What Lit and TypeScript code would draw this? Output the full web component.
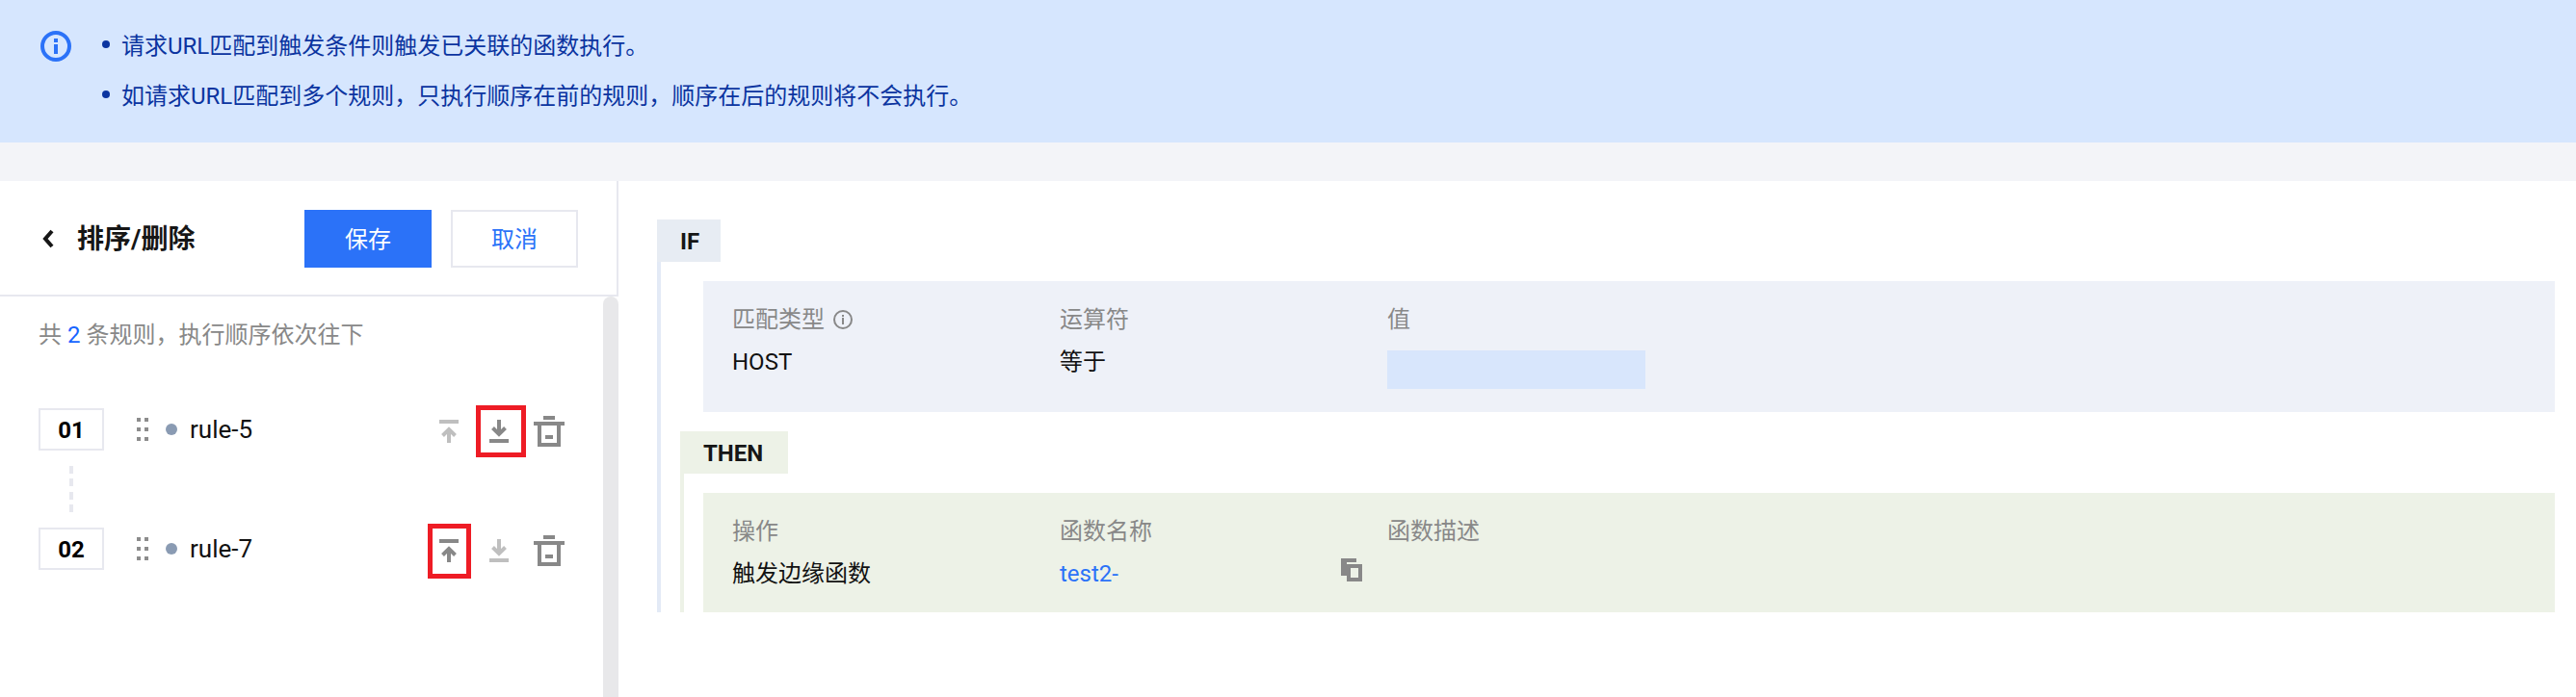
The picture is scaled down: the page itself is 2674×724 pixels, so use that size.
import {LitElement, html, css, svg} from 'lit';
import {customElement} from 'lit/decorators.js';

const upIcon = svg`<rect x="6" y="4" width="20" height="4" fill="currentColor"/><rect x="14" y="14" width="4" height="14" fill="currentColor"/><path d="M9.500 20.500 16 14l6.500 6.500" fill="none" stroke="currentColor" stroke-width="4"/>`;
const downIcon = svg`<rect x="6" y="24" width="20" height="4" fill="currentColor"/><rect x="14" y="4" width="4" height="14" fill="currentColor"/><path d="M9.500 12.500 16 19l6.500-6.500" fill="none" stroke="currentColor" stroke-width="4"/>`;
const trashIcon = svg`<rect x="10" y="0" width="12" height="4" fill="currentColor"/><rect x="0" y="6" width="32" height="4" fill="currentColor"/><path d="M6 10v20h20V10" fill="none" stroke="currentColor" stroke-width="4"/><rect x="12" y="20" width="8" height="4" fill="currentColor"/>`;

const rules = [
  {no: '01', name: 'rule-5', upOff: true, downOff: false, mark: 'down'},
  {no: '02', name: 'rule-7', upOff: false, downOff: true, mark: 'up'},
];

// full-width comma, written as an escape so it can't turn into an ascii one
const tips = [
  '请求URL匹配到触发条件则触发已关联的函数执行。',
  '如请求URL匹配到多个规则\uff0c只执行顺序在前的规则\uff0c顺序在后的规则将不会执行。',
];
const noteTail = '条规则\uff0c执行顺序依次往下';

@customElement('app-root')
export class AppRoot extends LitElement {
  static styles = css`
    :host {
      display: block;
      width: 2674px;
      height: 724px;
      overflow: hidden;
      background: #f3f4f8;
      font-family: Roboto, "Noto Sans CJK SC", sans-serif;
      font-size: 24px;
      color: #111;
    }

    .banner {
      height: 148px;
      box-sizing: border-box;
      background: #d6e6fe;
      padding: 20px 0 0 42px;
      display: flex;
      color: #0b34a0;
    }
    .banner-icon { margin: 12px 32px 0 0; display: block; }
    .banner-text { margin-top: 2px; }
    .banner-line {
      height: 52px;
      line-height: 52px;
      display: flex;
      align-items: center;
      gap: 12px;
    }
    .banner-line::before {
      content: "";
      width: 8px;
      height: 8px;
      margin-top: -4px;
      border-radius: 50%;
      background: #0b34a0;
    }

    .main {
      margin-top: 40px;
      height: 536px;
      display: flex;
      background: #fff;
    }

    .left {
      width: 642px;
      flex: none;
      display: flex;
      flex-direction: column;
    }
    .head {
      height: 118px;
      box-sizing: border-box;
      padding: 30px 40px 0 44px;
      border-right: 2px solid #e7e8ef;
      display: flex;
      align-items: flex-start;
    }
    .back { margin: 20px 24px 0 0; display: block; }
    .title { font-size: 28px; font-weight: 700; line-height: 62px; color: #161616; flex: 1; }
    .btn {
      width: 132px;
      height: 60px;
      box-sizing: border-box;
      line-height: 62px;
      text-align: center;
      background: #2b72f8;
      color: #fff;
    }
    .btn.plain {
      margin-left: 20px;
      line-height: 58px;
      border: 2px solid #e7e8ef;
      background: #fff;
      color: #2b72f8;
    }
    .left-body {
      flex: 1;
      display: flex;
      border-top: 2px solid #e7e8ef;
    }
    .list { flex: 1; padding: 23px 40px 0 40px; }
    .note { line-height: 34px; color: #888; margin-bottom: 59px; }
    .note b { font-weight: 400; color: #1664ff; }
    .track { width: 16px; flex: none; background: #e8e8ea; border-radius: 8px 8px 0 0; }

    .row { height: 44px; display: flex; align-items: center; }
    .no {
      width: 68px;
      height: 44px;
      box-sizing: border-box;
      border: 2px solid #e7e8ef;
      text-align: center;
      line-height: 42px;
      font-weight: 700;
      color: #000;
      margin-right: 34px;
    }
    .grip {
      width: 12px;
      display: grid;
      grid-template-columns: 4px 4px;
      justify-content: space-between;
      gap: 6px 0;
      margin-right: 18px;
    }
    .grip i { height: 4px; background: #8c8c8c; }
    .status { width: 12px; height: 12px; border-radius: 50%; background: #8a9bb3; margin-right: 13px; }
    .name { flex: 1; font-size: 26px; line-height: 46px; color: #111; }
    .acts { display: flex; gap: 20px; margin-top: 4px; }
    .act { position: relative; width: 32px; height: 32px; color: #888; }
    .act.off { color: #bfbfbf; }
    .act svg { display: block; }
    .act.mark-down::after,
    .act.mark-up::after {
      content: "";
      position: absolute;
      border: 5px solid #ee1c25;
      box-sizing: border-box;
    }
    .act.mark-down::after { left: -8px; top: -11px; width: 52px; height: 54px; }
    .act.mark-up::after { left: -6px; top: -12px; width: 45px; height: 57px; }
    .link {
      width: 4px;
      height: 48px;
      margin: 16px 0 16px 32px;
      background: repeating-linear-gradient(to bottom, #e7e8ef 0 8px, transparent 8px 13.33px);
    }

    .right { flex: 1; padding: 40px 22px 0 40px; }
    .tag {
      height: 44px;
      line-height: 46px;
      box-sizing: border-box;
      padding-left: 24px;
      font-weight: 700;
      color: #161616;
    }
    .if-tag { width: 66px; background: #e7ecf3; }
    .then-tag { width: 112px; background: #edf2e7; }
    .if-body { border-left: 4px solid #e3eaf6; padding: 20px 0 0 20px; height: 364px; box-sizing: border-box; }
    .then-body { border-left: 4px solid #edf2e7; padding: 20px 0 0 20px; }
    .then { margin-top: 20px; }
    .card {
      display: grid;
      grid-template-columns: 340px 340px 1fr;
      grid-auto-rows: 28px;
      row-gap: 16px;
      padding: 26px 30px 0;
      box-sizing: border-box;
      line-height: 28px;
    }
    .if-card { height: 136px; background: #eef1f8; margin-left: 24px; }
    .then-card { height: 124px; background: #edf2e7; }
    .lab { color: #888; display: flex; align-items: center; gap: 9px; }
    .val { color: #111; }
    .masked { width: 268px; height: 40px; margin-top: 2px; background: #d8e6fc; }
    .fn { display: flex; justify-content: space-between; padding-right: 26px; color: #2b72f8; }
    .fn svg { margin-top: -2px; display: block; }
  `;

  renderRule(r: (typeof rules)[number]) {
    return html`
      <div class="row">
        <div class="no">${r.no}</div>
        <div class="grip">${[0, 1, 2, 3, 4, 5].map(() => html`<i></i>`)}</div>
        <div class="status"></div>
        <div class="name">${r.name}</div>
        <div class="acts">
          <div class="act ${r.upOff ? 'off' : ''} ${r.mark === 'up' ? 'mark-up' : ''}">
            <svg width="32" height="32" viewBox="0 0 32 32">${upIcon}</svg>
          </div>
          <div class="act ${r.downOff ? 'off' : ''} ${r.mark === 'down' ? 'mark-down' : ''}">
            <svg width="32" height="32" viewBox="0 0 32 32">${downIcon}</svg>
          </div>
          <div class="act">
            <svg width="32" height="32" viewBox="0 0 32 32">${trashIcon}</svg>
          </div>
        </div>
      </div>
    `;
  }

  render() {
    return html`
      <div class="banner">
        <svg class="banner-icon" width="32" height="32" viewBox="0 0 32 32">
          <circle cx="16" cy="16" r="14" fill="none" stroke="#2b72f8" stroke-width="4"/>
          <rect x="14" y="8" width="4" height="4" fill="#2b72f8"/>
          <rect x="14" y="14" width="4" height="10" fill="#2b72f8"/>
        </svg>
        <div class="banner-text">
          ${tips.map((t) => html`<div class="banner-line">${t}</div>`)}
        </div>
      </div>

      <div class="main">
        <div class="left">
          <div class="head">
            <svg class="back" width="12" height="20" viewBox="0 0 12 20">
              <path d="M10 2 3 10l7 8" fill="none" stroke="#161616" stroke-width="4"/>
            </svg>
            <div class="title">排序/删除</div>
            <div class="btn">保存</div>
            <div class="btn plain">取消</div>
          </div>
          <div class="left-body">
            <div class="list">
              <div class="note">共 <b>2</b> ${noteTail}</div>
              ${this.renderRule(rules[0])}
              <div class="link"></div>
              ${this.renderRule(rules[1])}
            </div>
            <div class="track"></div>
          </div>
        </div>

        <div class="right">
          <div class="tag if-tag">IF</div>
          <div class="if-body">
            <div class="card if-card">
              <div class="lab">匹配类型
                <svg width="20" height="20" viewBox="0 0 20 20">
                  <circle cx="10" cy="10" r="9" fill="none" stroke="#888" stroke-width="2"/>
                  <rect x="9" y="5" width="2" height="2" fill="#888"/>
                  <rect x="9" y="8" width="2" height="7" fill="#888"/>
                </svg>
              </div>
              <div class="lab">运算符</div>
              <div class="lab">值</div>
              <div class="val">HOST</div>
              <div class="val">等于</div>
              <div class="masked"></div>
            </div>
            <div class="then">
              <div class="tag then-tag">THEN</div>
              <div class="then-body">
                <div class="card then-card">
                  <div class="lab">操作</div>
                  <div class="lab">函数名称</div>
                  <div class="lab">函数描述</div>
                  <div class="val">触发边缘函数</div>
                  <div class="fn">test2-
                    <svg width="22" height="24" viewBox="0 0 22 24">
                      <path d="M0 0h16v4H6v14H0z" fill="#888"/>
                      <rect x="8" y="8" width="12" height="14" fill="none" stroke="#888" stroke-width="4"/>
                    </svg>
                  </div>
                  <div></div>
                </div>
              </div>
            </div>
          </div>
        </div>
      </div>
    `;
  }
}
